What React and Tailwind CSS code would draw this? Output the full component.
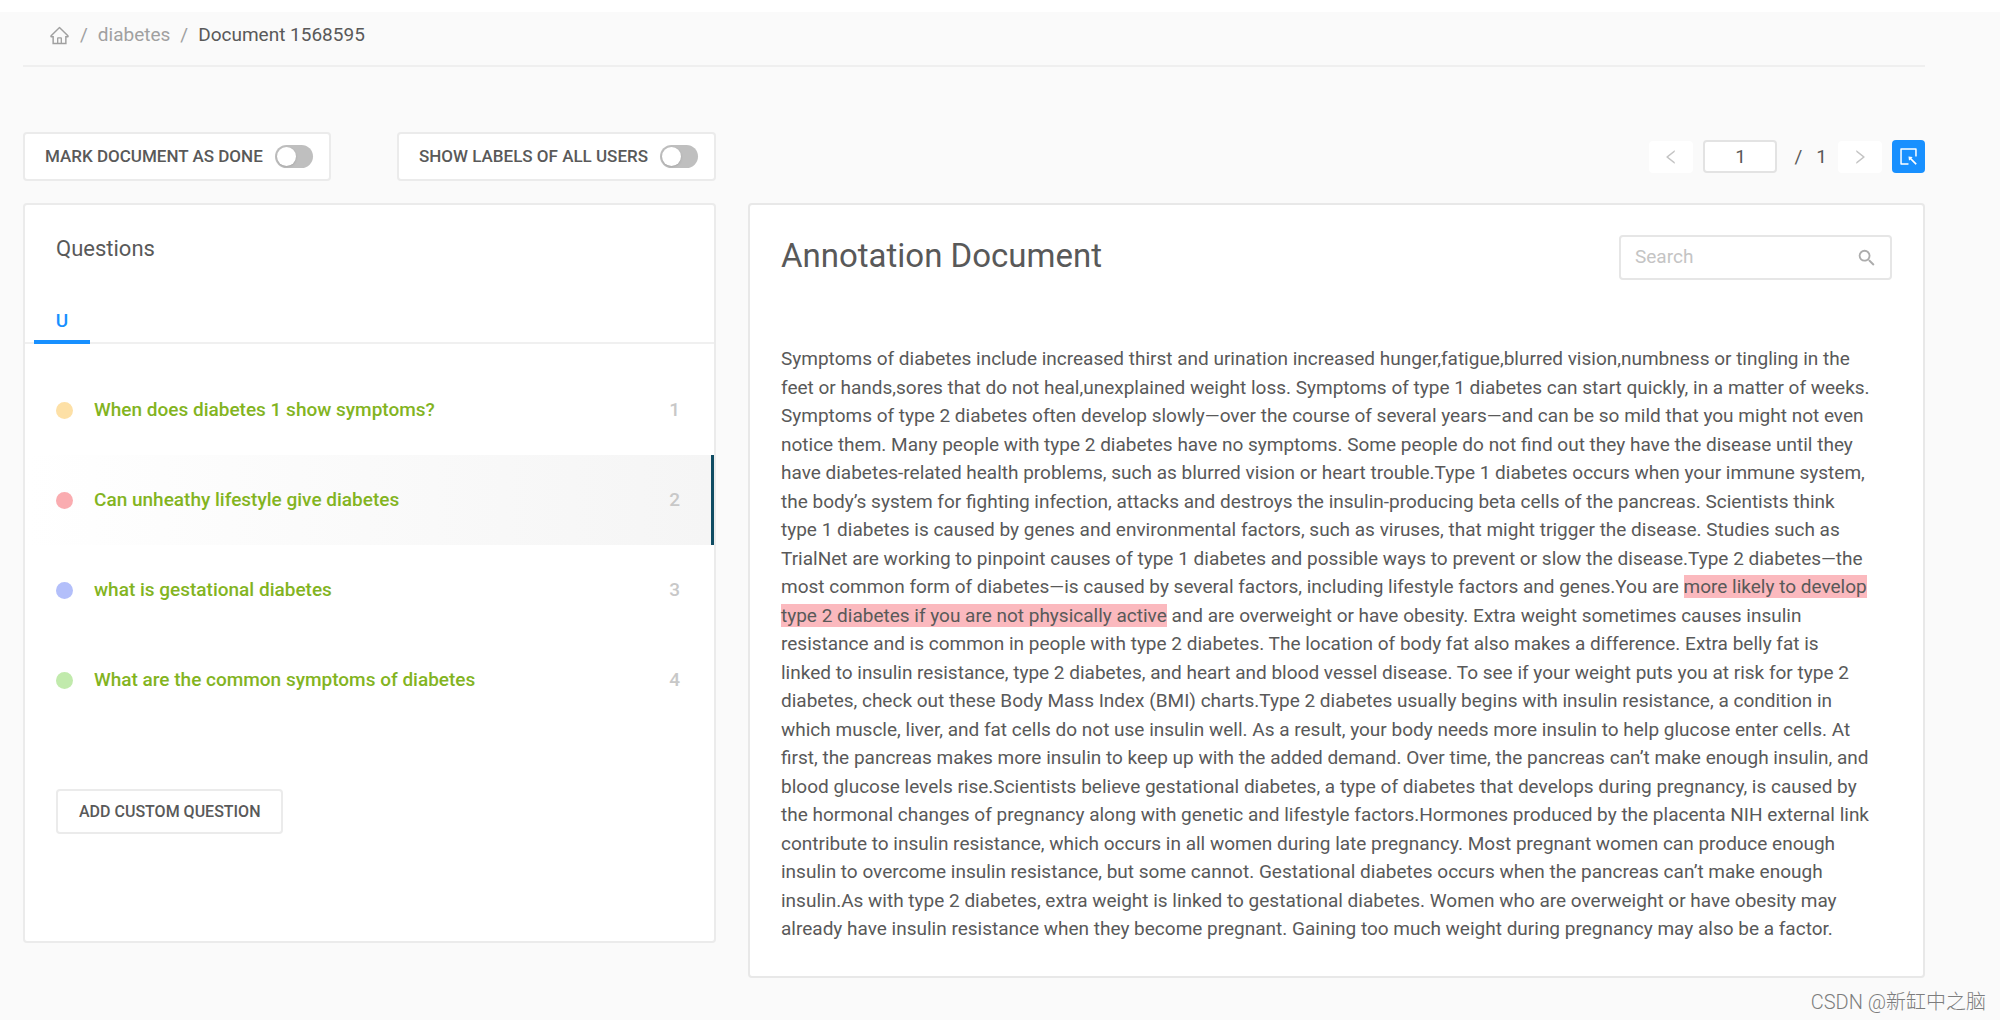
import React, { useState } from "react";
import {
  AiOutlineHome,
  AiOutlineLeft,
  AiOutlineRight,
  AiOutlineSelect,
} from "react-icons/ai";
import { MdSearch } from "react-icons/md";

const questions = [
  { id: 1, text: "When does diabetes 1 show symptoms?", dot: "bg-[#fde0a6]" },
  { id: 2, text: "Can unheathy lifestyle give diabetes", dot: "bg-[#faacb0]" },
  { id: 3, text: "what is gestational diabetes", dot: "bg-[#b3bffa]" },
  { id: 4, text: "What are the common symptoms of diabetes", dot: "bg-[#c1eaac]" },
];

const ToggleCard = ({ id, label }) => {
  const [on, setOn] = useState(false);

  return (
    <label
      htmlFor={id}
      className="flex h-[49px] cursor-pointer items-center gap-3 rounded border-2 border-[#ebebeb] bg-white pl-5 pr-4 text-[17px] font-medium whitespace-nowrap"
    >
      {label}
      <input
        id={id}
        type="checkbox"
        role="switch"
        checked={on}
        onChange={() => setOn(!on)}
        className="h-[23px] w-[38px] shrink-0 cursor-pointer appearance-none rounded-full bg-[#bfbfbf] p-[2px] before:block before:size-[19px] before:rounded-full before:bg-white before:shadow checked:bg-[#1890ff] checked:before:ml-[15px]"
      />
    </label>
  );
};

const Breadcrumb = () => (
  <nav className="flex h-[55px] items-center gap-[10px] border-b-2 border-[#efefef] pb-[7px] pl-[26px] text-[19px] leading-7 text-[#a0a0a0]">
    <a href="#home" aria-label="Home">
      <AiOutlineHome className="size-[21px]" />
    </a>
    <span>/</span>
    <a href="#diabetes">diabetes</a>
    <span>/</span>
    <span className="text-[#595959]">Document 1568595</span>
  </nav>
);

const Pager = () => {
  const [page, setPage] = useState("1");

  return (
    <div className="flex items-center justify-end text-[19px] leading-7">
      <button aria-label="Previous page" className="flex h-8 w-11 items-center justify-center rounded bg-white text-[#c4c4c4]">
        <AiOutlineLeft className="size-[18px]" />
      </button>
      <input
        aria-label="Page"
        value={page}
        onChange={(e) => setPage(e.target.value)}
        className="ml-[10px] h-[33px] w-[74px] rounded border-2 border-[#e3e3e3] bg-white text-center outline-none"
      />
      <span className="ml-[17px]">/</span>
      <span className="ml-[14px]">1</span>
      <button aria-label="Next page" className="ml-[11px] flex h-8 w-11 items-center justify-center rounded bg-white text-[#c4c4c4]">
        <AiOutlineRight className="size-[18px]" />
      </button>
      <button aria-label="Select text" className="ml-[10px] flex size-[33px] items-center justify-center rounded bg-[#1890ff] text-white">
        <AiOutlineSelect className="size-[21px]" />
      </button>
    </div>
  );
};

const Questions = () => {
  const [active, setActive] = useState(2);

  return (
    <section className="flex flex-col rounded border-2 border-[#ebebeb] bg-white pb-[107px]">
      <h2 className="px-[31px] pt-[30px] text-[22px] leading-7">Questions</h2>
      <div role="tablist" className="mt-11 flex border-b-2 border-[#f0f0f0] px-[9px]">
        <button role="tab" aria-selected="true" className="-mb-[2px] w-[56px] border-b-4 border-[#1890ff] pb-[5px] text-[19px] leading-7 font-medium text-[#1890ff]">
          U
        </button>
      </div>
      <ul className="mt-[21px]">
        {questions.map((q) => (
          <li key={q.id}>
            <button
              onClick={() => setActive(q.id)}
              className={`flex h-[90px] w-full items-center border-r-3 px-[31px] text-left text-[19px] leading-7 font-medium ${
                active === q.id
                  ? "border-[#0f4c63] bg-linear-to-r from-white to-[#f5f5f5]"
                  : "border-transparent"
              }`}
            >
              <span className={`size-[17px] rounded-full ${q.dot}`} />
              <span className="ml-[21px] grow text-[#83b41f]">{q.text}</span>
              <span className="text-[#c8c8c8]">{q.id}</span>
            </button>
          </li>
        ))}
      </ul>
      <button className="mt-[64px] ml-[31px] h-[45px] self-start rounded border-2 border-[#ebebeb] px-[21px] text-base font-medium">
        ADD CUSTOM QUESTION
      </button>
    </section>
  );
};

const Annotation = () => (
  <section className="rounded border-2 border-[#e8e8e8] bg-white px-[31px] pt-[30px] pb-8">
    <div className="flex items-center justify-between">
      <h1 className="pb-1 text-[33px] leading-10">Annotation Document</h1>
      <div className="flex h-[45px] w-[273px] items-center rounded border-2 border-[#e6e6e6] pr-3 pl-[14px]">
        <input
          type="search"
          aria-label="Search"
          placeholder="Search"
          className="min-w-0 grow text-[19px] outline-none placeholder:text-[#c4c4c4]"
        />
        <MdSearch className="size-6 text-[#acacac]" />
      </div>
    </div>
    <p className="mt-[65px] pr-[19px] text-[19px] leading-normal">
      Symptoms of diabetes include increased thirst and urination increased hunger,fatigue,blurred vision,numbness or tingling in the
      feet or hands,sores that do not heal,unexplained weight loss. Symptoms of type 1 diabetes can start quickly, in a matter of weeks.
      Symptoms of type 2 diabetes often develop slowly—over the course of several years—and can be so mild that you might not even
      notice them. Many people with type 2 diabetes have no symptoms. Some people do not find out they have the disease until they
      have diabetes-related health problems, such as blurred vision or heart trouble.Type 1 diabetes occurs when your immune system,
      the body’s system for fighting infection, attacks and destroys the insulin-producing beta cells of the pancreas. Scientists think
      type 1 diabetes is caused by genes and environmental factors, such as viruses, that might trigger the disease. Studies such as
      TrialNet are working to pinpoint causes of type 1 diabetes and possible ways to prevent or slow the disease.Type 2 diabetes—the
      most common form of diabetes—is caused by several factors, including lifestyle factors and genes.You are{" "}
      <mark className="bg-[#fbb9be] text-inherit">more likely to develop type 2 diabetes if you are not physically active</mark>{" "}
      and are overweight or have obesity. Extra weight sometimes causes insulin
      resistance and is common in people with type 2 diabetes. The location of body fat also makes a difference. Extra belly fat is
      linked to insulin resistance, type 2 diabetes, and heart and blood vessel disease. To see if your weight puts you at risk for type 2
      diabetes, check out these Body Mass Index (BMI) charts.Type 2 diabetes usually begins with insulin resistance, a condition in
      which muscle, liver, and fat cells do not use insulin well. As a result, your body needs more insulin to help glucose enter cells. At
      first, the pancreas makes more insulin to keep up with the added demand. Over time, the pancreas can’t make enough insulin, and
      blood glucose levels rise.Scientists believe gestational diabetes, a type of diabetes that develops during pregnancy, is caused by
      the hormonal changes of pregnancy along with genetic and lifestyle factors.Hormones produced by the placenta NIH external link
      contribute to insulin resistance, which occurs in all women during late pregnancy. Most pregnant women can produce enough
      insulin to overcome insulin resistance, but some cannot. Gestational diabetes occurs when the pancreas can’t make enough
      insulin.As with type 2 diabetes, extra weight is linked to gestational diabetes. Women who are overweight or have obesity may
      already have insulin resistance when they become pregnant. Gaining too much weight during pregnancy may also be a factor.
    </p>
  </section>
);

const App = () => (
  <div className="flex min-h-screen flex-col border-t-12 border-white bg-[#fafafa] pr-[75px] pl-[23px] font-[Roboto,'Noto_Sans_CJK_SC',sans-serif] text-[#595959]">
    <Breadcrumb />
    <main className="mt-[65px] grid grid-cols-[693fr_1177fr] items-start gap-x-8 gap-y-[22px]">
      <div className="flex items-center justify-between">
        <ToggleCard id="mark-done" label="MARK DOCUMENT AS DONE" />
        <ToggleCard id="show-labels" label="SHOW LABELS OF ALL USERS" />
      </div>
      <div className="self-center">
        <Pager />
      </div>
      <Questions />
      <Annotation />
    </main>
    <footer className="-mr-[61px] mt-auto pb-1 text-right text-xl leading-7 font-light text-[#7d7d7d]">
      CSDN @新缸中之脑
    </footer>
  </div>
);

export default App;
